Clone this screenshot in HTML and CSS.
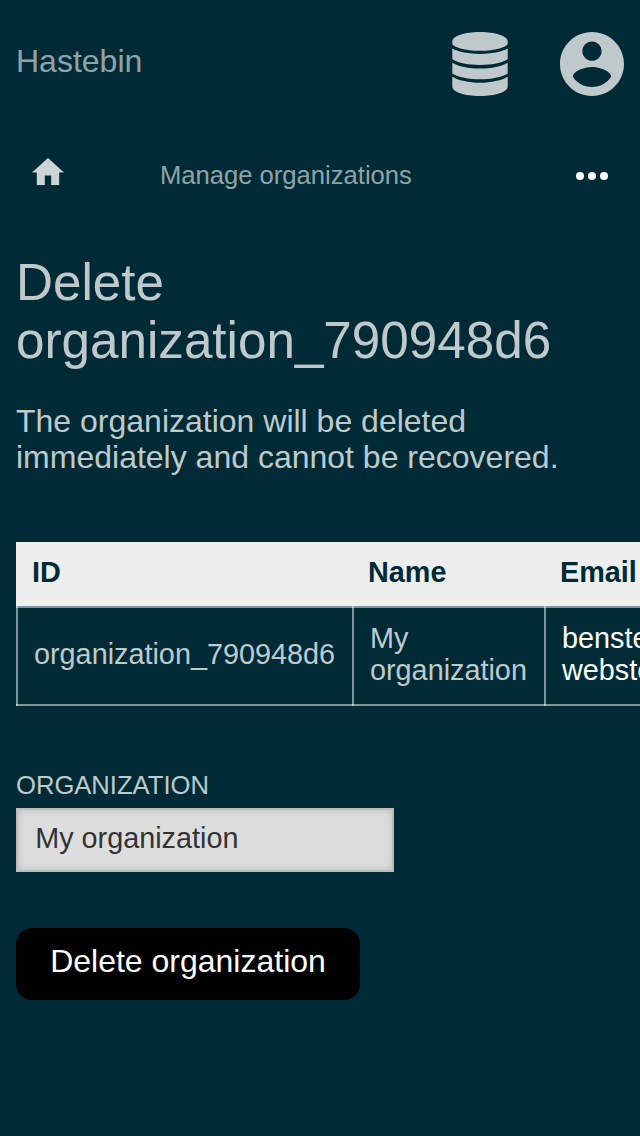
FILE: index.html
```
<!DOCTYPE html>
<html lang="en">
<head>
<meta charset="utf-8">
<title>Delete organization</title>
<link rel="stylesheet" href="styles.css">
</head>
<body>
<header class="topbar">
  <a class="brand">Hastebin</a>
  <div class="topbar-icons">
    <svg class="icon-database" viewBox="0 0 56 64"><path d="M.3 9.500C.3 4 13 0 28 0s27.700 4 27.700 9.500v2C55.700 15 43 18.800 28 18.800S.3 15 .3 11.500z"/><path d="M.3 16.500C6 20 17 21.900 28 21.900S50 20 55.700 16.500V27.300C50 31 39 33 28 33S6 31 .3 27.300z"/><path d="M.3 30.700C6 34.300 17 36.500 28 36.500s22-2.200 27.700-5.800V41.500C50 45.200 39 47.300 28 47.300S6 45.200 .3 41.500z"/><path d="M.3 44.700C6 48.300 17 50.700 28 50.700s22-2.400 27.700-6V54.500C55.700 60 43 64 28 64S.3 60 .3 54.500z"/></svg>
    <svg class="icon-account" viewBox="2 2 20 20"><path d="M12 2C6.480 2 2 6.480 2 12s4.480 10 10 10 10-4.480 10-10S17.520 2 12 2zm0 3c1.660 0 3 1.340 3 3s-1.340 3-3 3-3-1.340-3-3 1.340-3 3-3zm0 14.200c-2.500 0-4.710-1.280-6-3.220.03-1.990 4-3.080 6-3.080 1.990 0 5.970 1.090 6 3.080-1.290 1.940-3.500 3.220-6 3.220z"/></svg>
  </div>
</header>
<nav class="crumbs">
  <svg class="icon-home" viewBox="2 3 20 17"><path d="M10 20v-6h4v6h5v-8h3L12 3 2 12h3v8z"/></svg>
  <a class="crumb">Manage organizations</a>
  <svg class="icon-more" viewBox="0 0 32 8"><circle cx="4" cy="4" r="4"/><circle cx="16" cy="4" r="4"/><circle cx="28" cy="4" r="4"/></svg>
</nav>
<main class="content">
  <h1 class="title">Delete organization_790948d6</h1>
  <p class="warning">The organization will be deleted immediately and cannot be recovered.</p>
  <div class="table-wrap">
    <table class="orgs">
      <colgroup><col class="col-id"><col class="col-name"><col class="col-email"></colgroup>
      <thead><tr><th>ID</th><th>Name</th><th>Email</th></tr></thead>
      <tbody><tr><td>organization_790948d6</td><td>My organization</td><td class="link">benste<br>webste</td></tr></tbody>
    </table>
  </div>
  <form class="form">
    <label class="label" for="org">ORGANIZATION</label>
    <input class="field" id="org" type="text" value="My organization">
    <button class="submit" type="button">Delete organization</button>
  </form>
</main>
</body>
</html>
```
FILE: styles.css
```
* { box-sizing: border-box; }
html { overflow: hidden; background: #002b36; }
body {
  margin: 0;
  height: 1136px;
  overflow: hidden;
  background: #002b36;
  color: rgba(255, 255, 255, .75);
  font-family: "Liberation Sans", Arial, sans-serif;
  font-size: 32px;
  line-height: 36px;
}
svg { display: block; fill: currentColor; }
.topbar {
  display: flex;
  justify-content: space-between;
  height: 128px;
  padding: 32px 16px 0;
}
.brand { padding-top: 11px; color: rgba(255, 255, 255, .58); }
.topbar-icons { display: flex; gap: 52px; }
.icon-database { width: 56px; height: 64px; }
.icon-account { width: 64px; height: 64px; }
.crumbs {
  display: flex;
  align-items: flex-start;
  height: 96px;
  padding: 29px 32px 0;
  font-size: 25.6px;
}
.icon-home { width: 32px; height: 27.2px; margin-top: 1.2px; color: rgba(255, 255, 255, .8); }
.crumb { margin-left: 96px; color: rgba(255, 255, 255, .58); }
.icon-more { width: 32px; height: 8px; margin: 15px 0 0 auto; color: #fff; }
.content { padding: 30px 16px 0; }
.title { margin: 0; font-size: 51.2px; line-height: 58px; font-weight: 400; }
.warning { margin: 33px 0 0; }
.table-wrap { margin: 67px -16px 0 0; overflow: hidden; }
.orgs {
  width: 800px;
  table-layout: fixed;
  border-spacing: 0;
  font-size: 28.8px;
  line-height: 32px;
}
.col-id { width: 336px; }
.col-name { width: 192px; }
.orgs th {
  height: 64px;
  padding: 0 16px 4px;
  background: #eee;
  color: #002b36;
  text-align: left;
}
.orgs td {
  height: 100px;
  padding: 2px 16px 6px 18px;
  background:
    linear-gradient(rgba(255, 255, 255, .5), rgba(255, 255, 255, .5)) 0 0 / 2px 100% no-repeat,
    linear-gradient(rgba(255, 255, 255, .5), rgba(255, 255, 255, .5)) 0 0 / 100% 2px no-repeat,
    linear-gradient(rgba(255, 255, 255, .5), rgba(255, 255, 255, .5)) 0 100% / 100% 2px no-repeat;
}
.orgs .link { color: #fff; }
.form { display: flex; flex-direction: column; align-items: flex-start; margin-top: 61px; }
.label { font-size: 25.6px; }
.field {
  width: 378px;
  height: 64px;
  margin-top: 5px;
  padding: 0 17.2px 3px;
  border: 2px solid #bbb;
  border-radius: 0;
  background: #ddd;
  box-shadow: inset 0 0 8px rgba(0, 0, 0, .15);
  color: #333;
  font: 28.8px "Liberation Sans", Arial, sans-serif;
}
.submit {
  width: 344px;
  height: 72px;
  margin-top: 56px;
  padding: 0 0 6px;
  border: 0;
  border-radius: 16px;
  background: #000;
  color: #fff;
  font: 32px "Liberation Sans", Arial, sans-serif;
}
```
